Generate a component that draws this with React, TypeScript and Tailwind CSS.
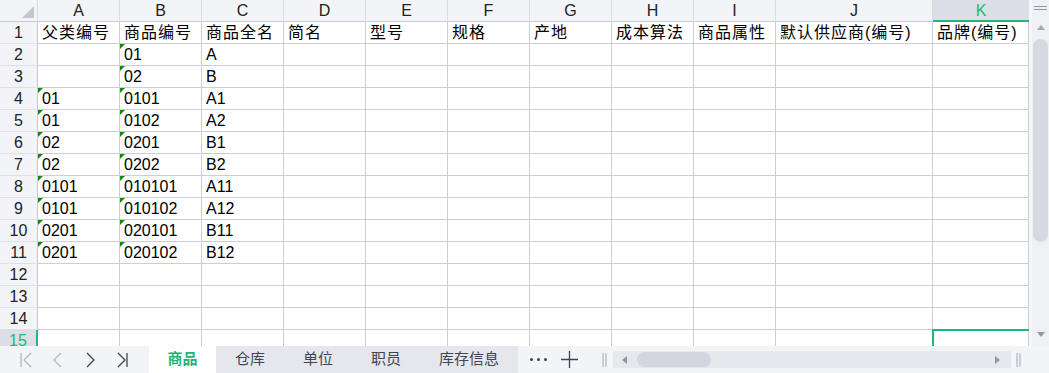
import React from "react";

const COLS = ["A", "B", "C", "D", "E", "F", "G", "H", "I", "J", "K"];

const HEAD = ["父类编号", "商品编号", "商品全名", "简名", "型号", "规格", "产地", "成本算法", "商品属性", "默认供应商(编号)", "品牌(编号)"];

const DATA: string[][] = [
  ["", "01", "A"],
  ["", "02", "B"],
  ["01", "0101", "A1"],
  ["01", "0102", "A2"],
  ["02", "0201", "B1"],
  ["02", "0202", "B2"],
  ["0101", "010101", "A11"],
  ["0101", "010102", "A12"],
  ["0201", "020101", "B11"],
  ["0201", "020102", "B12"],
];

const TABS = ["商品", "仓库", "单位", "职员", "库存信息"];

function Flag() {
  return (
    <span className="absolute left-0 top-0 h-[5px] w-[5px] bg-[#13880f] [clip-path:polygon(0_0,100%_0,0_100%)]" />
  );
}

function Cell({ text, flag, selected, wide }: { text?: string; flag?: boolean; selected?: boolean; wide?: boolean }) {
  return (
    <div
      className={
        "relative h-[22px] border-b border-r border-[#cbced7] bg-white pl-[4px] text-[16px] leading-[21px] text-black whitespace-nowrap" +
        (wide ? " tracking-[1px]" : "")
      }
    >
      {flag && <Flag />}
      {text}
      {selected && (
        <span className="absolute -left-px -top-px h-[30px] w-[120px] border-l-[2px] border-t-[2px] border-[#21b77b]" />
      )}
    </div>
  );
}

function Grid() {
  const rows: React.ReactNode[] = [];
  for (let r = 1; r <= 15; r++) {
    const active = r === 15;
    rows.push(
      <div
        key={"h" + r}
        className={
          active
            ? "h-[22px] border-b border-r-[2px] border-b-[#d9dce3] border-r-[#21b77b] bg-[#dcdfe5] text-center text-[16px] leading-[21px] text-[#21b77b]"
            : "h-[22px] border-b border-r border-b-[#dde0e6] border-r-[#c6cad3] bg-[#f3f4f7] text-center text-[16px] leading-[21px] text-[#222]"
        }
      >
        {r}
      </div>
    );
    for (let c = 0; c < COLS.length; c++) {
      let text = "";
      let flag = false;
      if (r === 1) text = HEAD[c];
      else if (r <= 11 && c < 3) {
        text = DATA[r - 2][c];
        flag = c === 1 || (c === 0 && text !== "");
      }
      rows.push(<Cell key={r + "-" + c} text={text} flag={flag} wide={r === 1} selected={active && c === 10} />);
    }
  }

  return (
    <div className="grid flex-1 grid-cols-[38px_82px_82px_82px_82px_82px_82px_82px_82px_82px_157px_96px] content-start overflow-hidden">
      <div className="relative h-[22px] border-b border-r border-b-[#c6cad3] border-r-[#d9dce3] bg-[#f3f4f7]">
        <svg className="absolute left-[22px] top-[6px]" width="12" height="12" viewBox="0 0 12 12">
          <path d="M12 0 L12 12 L0 12 Z" fill="#c3c6cd" />
        </svg>
      </div>
      {COLS.map((c) =>
        c === "K" ? (
          <div
            key={c}
            className="h-[22px] border-b-[2px] border-b-[#21b77b] bg-[#dcdfe5] text-center text-[16px] leading-[21px] text-[#21b77b]"
          >
            {c}
          </div>
        ) : (
          <div
            key={c}
            className="h-[22px] border-b border-r border-b-[#c6cad3] border-r-[#d9dce3] bg-[#f3f4f7] text-center text-[16px] leading-[21px] text-[#222]"
          >
            {c}
          </div>
        )
      )}
      {rows}
    </div>
  );
}

function VScroll() {
  return (
    <div className="flex h-full w-[20px] flex-col items-center border-l-[3px] border-[#f6f7f9] bg-[#eef0f4]">
      <div className="mt-[6px] flex w-[13px] flex-col gap-[2px]">
        <span className="h-px w-full bg-[#8f96a4]" />
        <span className="h-px w-full bg-[#8f96a4]" />
      </div>
      <svg className="mt-[15px]" width="8" height="5" viewBox="0 0 8 5">
        <path d="M0 5 L4 0 L8 5 Z" fill="#a2a8b4" />
      </svg>
      <div className="mt-[9px] h-[203px] w-[15px] rounded-full bg-[#d6d9e0]" />
      <div className="flex-1" />
      <svg className="mb-[9px]" width="8" height="5" viewBox="0 0 8 5">
        <path d="M0 0 L4 5 L8 0 Z" fill="#8f96a4" />
      </svg>
    </div>
  );
}

function Nav({ d, dim }: { d: string; dim?: boolean }) {
  return (
    <div className="flex h-full w-[32px] items-center justify-center">
      <svg width="14" height="16" viewBox="0 0 14 16" fill="none">
        <path d={d} stroke={dim ? "#b3b8c2" : "#3d4352"} strokeWidth="1.3" />
      </svg>
    </div>
  );
}

function TabBar() {
  return (
    <div className="flex h-[27px] shrink-0 items-stretch bg-[#f3f4f7] text-[15px]">
      <div className="flex w-[149px] pl-[10px]">
        <Nav d="M2 1 L2 15 M12 1 L5 8 L12 15" dim />
        <Nav d="M10 1 L3 8 L10 15" dim />
        <Nav d="M4 1 L11 8 L4 15" />
        <Nav d="M3 1 L10 8 L3 15 M12 1 L12 15" />
      </div>
      {TABS.map((t, i) =>
        i === 0 ? (
          <div key={t} className="flex w-[67px] items-center justify-center bg-white font-bold text-[#1fb57a]">
            {t}
          </div>
        ) : (
          <div key={t} className="flex items-center justify-center bg-[#e6e7ec] px-[19px] text-[#3f4555]">
            {t}
          </div>
        )
      )}
      <div className="ml-[12px] flex items-center gap-[4px]">
        <span className="h-[3px] w-[3px] rounded-full bg-[#3d4352]" />
        <span className="h-[3px] w-[3px] rounded-full bg-[#3d4352]" />
        <span className="h-[3px] w-[3px] rounded-full bg-[#3d4352]" />
      </div>
      <div className="ml-[14px] flex items-center">
        <svg width="17" height="17" viewBox="0 0 17 17">
          <path d="M8.5 0 L8.5 17 M0 8.5 L17 8.5" stroke="#3d4352" strokeWidth="1.3" />
        </svg>
      </div>
      <div className="ml-[24px] flex items-center">
        <svg width="5" height="14" viewBox="0 0 5 14">
          <path d="M1 0 L1 14 M4 0 L4 14" stroke="#a0a6b2" strokeWidth="1" />
        </svg>
      </div>
      <div className="ml-[6px] flex items-center">
        <div className="flex h-[17px] w-[398px] items-center bg-[#e6e8ee]">
          <svg className="ml-[9px]" width="5" height="8" viewBox="0 0 5 8">
            <path d="M5 0 L0 4 L5 8 Z" fill="#8f96a4" />
          </svg>
          <div className="ml-[10px] h-[15px] w-[74px] rounded-full bg-[#d3d6de]" />
          <div className="flex-1" />
          <svg className="mr-[11px]" width="5" height="8" viewBox="0 0 5 8">
            <path d="M0 0 L5 4 L0 8 Z" fill="#8f96a4" />
          </svg>
        </div>
      </div>
      <div className="ml-[5px] flex items-center">
        <svg width="5" height="14" viewBox="0 0 5 14">
          <path d="M1 0 L1 14 M4 0 L4 14" stroke="#a0a6b2" strokeWidth="1" />
        </svg>
      </div>
    </div>
  );
}

export default function App() {
  return (
    <div className="flex h-[373px] w-[1049px] flex-col overflow-hidden bg-white font-['Liberation_Sans','Noto_Sans_CJK_SC',sans-serif]">
      <div className="flex h-[346px] overflow-hidden">
        <Grid />
        <VScroll />
      </div>
      <TabBar />
    </div>
  );
}
